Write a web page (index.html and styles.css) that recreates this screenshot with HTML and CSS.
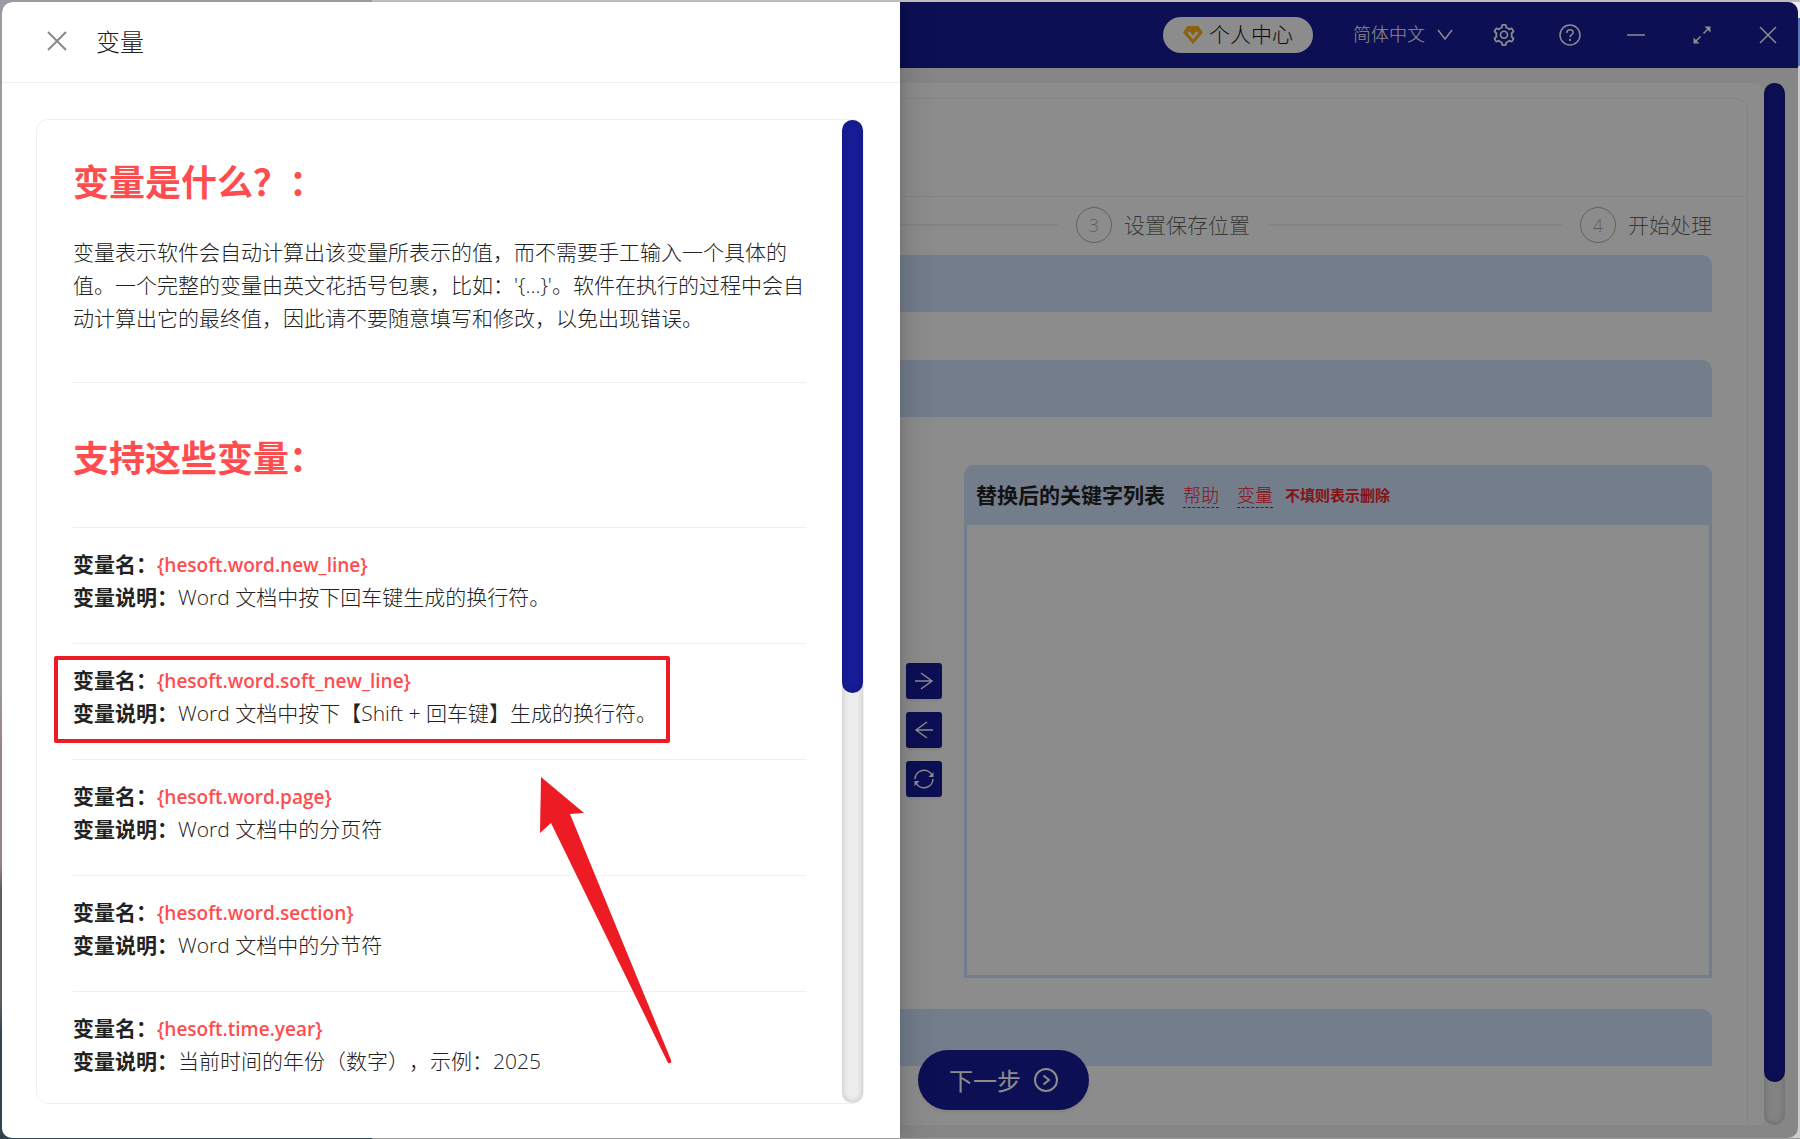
FILE: index.html
```
<!DOCTYPE html>
<html lang="zh-CN">
  <head>
    <meta charset="UTF-8" />
    <meta name="viewport" content="width=device-width, initial-scale=1.0" />
    <title>变量</title>
    <link rel="stylesheet" href="styles.css">
  </head>
  <body>
    <div class="window">
      <header class="titlebar">
        <button class="account" type="button">
          <svg class="icon-vip" viewBox="0 0 20 20" aria-hidden="true">
            <path d="M4.5 1h11L20 7.5 10 19 0 7.5z" fill="#ffb21f" />
            <path d="M5.5 7l4.5 5.5L14.5 7" fill="none" stroke="#fff" stroke-width="2.6" />
          </svg>
          <span>个人中心</span>
        </button>
        <label class="language">
          <select aria-label="语言">
            <option>简体中文</option>
          </select>
          <svg class="icon-chevron" viewBox="0 0 16 16" aria-hidden="true">
            <path d="M1 3l7 9 7-9" />
          </svg>
        </label>
        <nav class="tools">
          <button class="tool" type="button" aria-label="设置">
            <svg class="icon-filled" viewBox="64 64 896 896">
              <path d="M924.8 625.7l-65.5-56c3.1-19 4.7-38.4 4.7-57.8s-1.6-38.8-4.7-57.8l65.5-56a32.03 32.03 0 009.3-35.2l-.9-2.6a443.74 443.74 0 00-79.7-137.9l-1.8-2.1a32.12 32.12 0 00-35.1-9.5l-81.3 28.9c-30-24.6-63.5-44-99.7-57.6l-15.7-85a32.05 32.05 0 00-25.8-25.7l-2.7-.5c-52.1-9.4-106.9-9.4-159 0l-2.7.5a32.05 32.05 0 00-25.8 25.7l-15.8 85.4a351.86 351.86 0 00-99 57.4l-81.9-29.1a32 32 0 00-35.1 9.5l-1.8 2.1a446.02 446.02 0 00-79.7 137.9l-.9 2.6c-4.5 12.5-.8 26.5 9.3 35.2l66.3 56.6c-3.1 18.8-4.6 38-4.6 57.1 0 19.2 1.5 38.4 4.6 57.1L99 625.5a32.03 32.03 0 00-9.3 35.2l.9 2.6c18.1 50.4 44.9 96.9 79.7 137.9l1.8 2.1a32.12 32.12 0 0035.1 9.5l81.9-29.1c29.8 24.5 63.1 43.9 99 57.4l15.8 85.4a32.05 32.05 0 0025.8 25.7l2.7.5a449.4 449.4 0 00159 0l2.7-.5a32.05 32.05 0 0025.8-25.7l15.7-85a350 350 0 0099.7-57.6l81.3 28.9a32 32 0 0035.1-9.5l1.8-2.1c34.8-41.1 61.6-87.5 79.7-137.9l.9-2.6c4.5-12.3.8-26.3-9.3-35zM788.3 465.9c2.5 15.1 3.8 30.6 3.8 46.1s-1.3 31-3.8 46.1l-6.6 40.1 74.7 63.9a370.03 370.03 0 01-42.6 73.6L721 702.8l-31.4 25.8c-23.9 19.6-50.5 35-79.3 45.8l-38.1 14.3-17.9 97a377.5 377.5 0 01-85 0l-17.9-97.2-37.8-14.5c-28.5-10.8-55-26.2-78.7-45.7l-31.4-25.9-93.4 33.2c-17-22.9-31.2-47.6-42.6-73.6l75.5-64.5-6.5-40c-2.4-14.9-3.7-30.3-3.7-45.5 0-15.3 1.2-30.6 3.7-45.5l6.5-40-75.5-64.5c11.3-26.1 25.6-50.7 42.6-73.6l93.4 33.2 31.4-25.9c23.7-19.5 50.2-34.9 78.7-45.7l37.9-14.3 17.9-97.2c28.1-3.2 56.8-3.2 85 0l17.9 97 38.1 14.3c28.7 10.8 55.4 26.2 79.3 45.8l31.4 25.8 92.8-32.9c17 22.9 31.2 47.6 42.6 73.6L781.8 426l6.5 39.9zM512 326c-97.2 0-176 78.8-176 176s78.8 176 176 176 176-78.8 176-176-78.8-176-176-176zm79.2 255.2A111.6 111.6 0 01512 614c-29.9 0-58-11.7-79.2-32.8A111.6 111.6 0 01400 502c0-29.9 11.7-58 32.8-79.2C454 401.6 482.1 390 512 390c29.9 0 58 11.6 79.2 32.8A111.6 111.6 0 01624 502c0 29.9-11.7 58-32.8 79.2z" />
            </svg>
          </button>
          <button class="tool" type="button" aria-label="帮助">
            <svg viewBox="0 0 22 22">
              <circle cx="11" cy="11" r="10" />
              <path d="M7.8 9c0-2 1.4-3.2 3.2-3.2s3.2 1.2 3.2 2.9c0 2-3.2 2.1-3.2 4.5" />
              <circle cx="11" cy="16" r=".4" />
            </svg>
          </button>
          <button class="tool" type="button" aria-label="最小化">
            <svg viewBox="0 0 22 22"><path d="M2 11h18" /></svg>
          </button>
          <button class="tool" type="button" aria-label="最大化">
            <svg viewBox="0 0 22 22">
              <path d="M12.5 9.5L18 4M9.5 12.5L4 18" />
              <path class="tip" d="M13.5 2.5h6v6zM8.5 19.5h-6v-6z" />
            </svg>
          </button>
          <button class="tool" type="button" aria-label="关闭窗口">
            <svg viewBox="0 0 22 22"><path d="M3 3l16 16M19 3L3 19" /></svg>
          </button>
        </nav>
      </header>

      <main class="workspace">
        <div class="page">
          <section class="card">
            <div class="card-head"></div>
            <ol class="steps">
              <li class="step-lead"></li>
              <li class="step step-grow">
                <span class="step-number">3</span>
                <span class="step-title">设置保存位置</span>
              </li>
              <li class="step">
                <span class="step-number">4</span>
                <span class="step-title">开始处理</span>
              </li>
            </ol>
            <div class="bar"></div>
            <div class="bar"></div>
            <div class="transfer">
              <div class="panel"></div>
              <div class="transfer-buttons">
                <button class="move" type="button" aria-label="右移">
                  <svg viewBox="0 0 20 20"><path d="M1 10h17M7 2l11 8-11 8" /></svg>
                </button>
                <button class="move" type="button" aria-label="左移">
                  <svg viewBox="0 0 20 20"><path d="M19 10H2M13 2L2 10l11 8" /></svg>
                </button>
                <button class="move" type="button" aria-label="交换">
                  <svg viewBox="0 0 20 20">
                    <path d="M1 10A9 9 0 0 1 18 6.2M19 10A9 9 0 0 1 2 13.8" />
                    <path class="tip" d="M19.5 3v5h-5zM.5 17v-5h5z" />
                  </svg>
                </button>
              </div>
              <div class="panel">
                <div class="panel-head">
                  <h3>替换后的关键字列表</h3>
                  <a href="#help">帮助</a>
                  <a href="#variables">变量</a>
                  <small>不填则表示删除</small>
                </div>
              </div>
            </div>
            <div class="bar"></div>
          </section>
        </div>
        <div class="scrollbar">
          <div class="thumb thumb-page"></div>
        </div>
      </main>

      <button class="next" type="button">
        <span>下一步</span>
        <svg viewBox="0 0 24 24" aria-hidden="true">
          <circle cx="12" cy="12" r="11" />
          <path d="M9.5 7.5l5.5 4.5-5.5 4.5" />
        </svg>
      </button>

      <div class="mask"></div>

      <aside class="drawer" id="variables">
        <header class="drawer-head">
          <button class="close" type="button" aria-label="关闭">
            <svg viewBox="0 0 22 22"><path d="M2 2l18 18M20 2L2 20" /></svg>
          </button>
          <span>变量</span>
        </header>
        <div class="drawer-body">
          <div class="doc-card">
            <article class="doc">
              <section class="intro">
                <h1>变量是什么？：</h1>
                <p>
                  变量表示软件会自动计算出该变量所表示的值，而不需要手工输入一个具体的值。一个完整的变量由英文花括号包裹，比如：'{...}'。软件在执行的过程中会自动计算出它的最终值，因此请不要随意填写和修改，以免出现错误。
                </p>
              </section>
              <h1 class="list-title">支持这些变量：</h1>
              <section class="variable">
                <div><b>变量名：</b><code>{hesoft.word.new_line}</code></div>
                <div><b>变量说明：</b>Word 文档中按下回车键生成的换行符。</div>
              </section>
              <section class="variable marked">
                <div><b>变量名：</b><code>{hesoft.word.soft_new_line}</code></div>
                <div><b>变量说明：</b>Word 文档中按下【Shift + 回车键】生成的换行符。</div>
                <svg class="arrow" viewBox="0 0 134 288" aria-hidden="true">
                  <path d="M2 1l43 36-14 1 101 246q1 4-3 3L12 47 1 57z" />
                </svg>
              </section>
              <section class="variable">
                <div><b>变量名：</b><code>{hesoft.word.page}</code></div>
                <div><b>变量说明：</b>Word 文档中的分页符</div>
              </section>
              <section class="variable">
                <div><b>变量名：</b><code>{hesoft.word.section}</code></div>
                <div><b>变量说明：</b>Word 文档中的分节符</div>
              </section>
              <section class="variable">
                <div><b>变量名：</b><code>{hesoft.time.year}</code></div>
                <div><b>变量说明：</b>当前时间的年份（数字），示例：2025</div>
              </section>
            </article>
            <div class="scrollbar">
              <div class="thumb thumb-doc"></div>
            </div>
          </div>
        </div>
      </aside>
    </div>
  </body>
</html>
```
FILE: styles.css
```
*,
*::before,
*::after {
  box-sizing: border-box;
}
body {
  margin: 0;
  padding: 2px 2px 1px;
  height: 100vh;
  overflow: hidden;
  font-family: "Open Sans", "Noto Sans CJK SC", sans-serif;
  font-weight: 300;
  font-size: 21px;
  line-height: 33px;
  color: #222;
  text-spacing-trim: space-all;
  /* desktop behind the window */
  background:
    linear-gradient(#9b9ca3 0 59%, #988484 66% 76%, #5d5d64 78% 88%, #2f4450 91%) left / 372px 100% no-repeat,
    linear-gradient(#bcbcbc, #bcbcbc) top / 100% 2px no-repeat,
    linear-gradient(#999, #999) bottom / 100% 1px no-repeat,
    linear-gradient(#eee 0 18px, #5b78b8 18px 66px, #ccc 66px) #ccc;
}
button,
select {
  font: inherit;
  border: none;
  padding: 0;
  cursor: pointer;
}
svg {
  display: block;
  fill: none;
  stroke: currentColor;
  stroke-width: 1.5;
}
svg .tip,
svg.icon-filled {
  fill: currentColor;
  stroke: none;
}
.window {
  position: relative;
  display: flex;
  flex-direction: column;
  height: 100%;
  background: #f5f5f5;
  border-radius: 10px;
  overflow: hidden;
}

/* title bar */
.titlebar {
  display: flex;
  align-items: center;
  justify-content: flex-end;
  gap: 40px;
  height: 66px;
  padding: 0 19px 1px 0;
  background: #171c97;
  color: #fff;
}
.account {
  display: flex;
  align-items: center;
  gap: 6px;
  height: 36px;
  padding: 0 20px;
  border-radius: 18px;
  background: #fff;
  color: #111;
}
.icon-vip {
  width: 20px;
  stroke: none;
}
.language {
  display: flex;
  align-items: center;
  gap: 12px;
  font-size: 18px;
}
.language select {
  appearance: none;
  background: none;
  color: inherit;
}
.icon-chevron {
  width: 16px;
}
.tools {
  display: flex;
  gap: 44px;
}
.tool {
  width: 22px;
  background: none;
  color: #fff;
}

/* page behind the drawer */
.workspace {
  display: flex;
  flex: 1;
  min-height: 0;
  padding: 15px 13px 13px 14px;
}
.page {
  flex: 1;
  padding: 15px 16px 0;
  background: #fff;
  border-radius: 10px 10px 0 0;
  overflow: hidden;
}
.card {
  height: 120%;
  padding: 0 35px;
  border: 1px solid #f0f0f0;
  border-radius: 12px;
}
.card-head {
  height: 98px;
  margin: 0 -35px 10px;
  border-bottom: 1px solid #f0f0f0;
}
.steps {
  display: flex;
  margin: 0 0 12px;
  padding: 0;
  list-style: none;
}
.step-lead {
  flex: 2;
}
.step {
  display: flex;
  align-items: center;
  gap: 12px;
  color: rgba(0, 0, 0, 0.6);
}
.step-grow {
  flex: 1;
}
.step-lead,
.step-grow {
  display: flex;
  align-items: center;
}
.step-lead::after,
.step-grow::after {
  content: "";
  flex: 1;
  height: 2px;
  margin: 0 18px 0 6px;
  background: #f0f0f0;
}
.step-number {
  width: 36px;
  height: 36px;
  border: 1px solid rgba(0, 0, 0, 0.3);
  border-radius: 50%;
  font-size: 18px;
  line-height: 34px;
  text-align: center;
  color: rgba(0, 0, 0, 0.35);
}
.bar {
  height: 57px;
  margin-bottom: 48px;
  background: #d2e3fd;
  border-radius: 10px 10px 0 0;
}
.transfer {
  display: grid;
  grid-template-columns: 1fr 148px 1fr;
  margin-bottom: 31px;
}
.panel {
  height: 513px;
  border: 3px solid #d2e3fd;
  border-radius: 10px 10px 0 0;
}
.panel-head {
  display: flex;
  align-items: center;
  height: 57px;
  padding: 0 0 3px 9px;
  background: #d2e3fd;
  font-size: 18px;
  line-height: 24px;
}
.panel-head h3 {
  margin: 0;
  font-size: 21px;
  font-weight: 700;
}
.panel-head a {
  margin-left: 18px;
  color: #f5222d;
  text-decoration: none;
  border-bottom: 1px dashed red;
}
.panel-head small {
  margin-left: 12px;
  font-size: 15px;
  font-weight: 700;
  color: #f5222d;
}
.transfer-buttons {
  display: flex;
  flex-direction: column;
  align-items: flex-end;
  justify-content: center;
  gap: 13px;
  padding: 17px 22px 0 0;
}
.move {
  display: grid;
  place-items: center;
  width: 36px;
  height: 36px;
  border-radius: 3px;
  background: #171c97;
  color: #fff;
  box-shadow: 0 2px 2px rgba(0, 0, 0, 0.06);
}
.move svg {
  width: 20px;
}
.next {
  position: absolute;
  left: calc(50% + 18px);
  bottom: 28px;
  display: flex;
  align-items: center;
  gap: 13px;
  height: 60px;
  padding: 0 31px;
  border-radius: 30px;
  background: #171c97;
  color: #fff;
  font-size: 24px;
  font-weight: 400;
  box-shadow: 0 3px 3px rgba(0, 0, 0, 0.06);
}
.next svg {
  width: 24px;
  stroke-width: 2;
}
.scrollbar {
  width: 21px;
  border-radius: 11px;
  background: #ededed;
  box-shadow: inset 0 0 6px rgba(0, 0, 0, 0.2);
}
.thumb {
  border-radius: 11px;
  background: #171c97;
  box-shadow: inset 0 0 6px rgba(0, 0, 0, 0.2);
}
.thumb-page {
  height: 95.9%;
}
.thumb-doc {
  height: 58.3%;
}
.mask {
  position: absolute;
  inset: 0;
  background: rgba(0, 0, 0, 0.45);
}

/* drawer */
.drawer {
  position: absolute;
  inset: 0 50% 0 0;
  display: flex;
  flex-direction: column;
  background: #fff;
  box-shadow:
    6px 0 16px rgba(0, 0, 0, 0.08),
    3px 0 6px -4px rgba(0, 0, 0, 0.12),
    9px 0 28px 8px rgba(0, 0, 0, 0.05);
}
.drawer-head {
  display: flex;
  align-items: center;
  gap: 28px;
  height: 81px;
  padding: 0 0 2px 44px;
  border-bottom: 1px solid #f0f0f0;
  font-size: 24px;
}
.close {
  width: 22px;
  background: none;
  color: #888;
}
.close svg {
  stroke-width: 2;
}
.drawer-body {
  flex: 1;
  min-height: 0;
  padding: 36px 36px 34px 34px;
}
.doc-card {
  display: flex;
  height: 100%;
  border: 1px solid #f0f0f0;
  border-radius: 12px;
}
.doc {
  flex: 1;
  padding: 0 36px;
  overflow: hidden;
}
.doc h1 {
  margin: 0;
  font-size: 36px;
  line-height: 54px;
  font-weight: 700;
  color: #ff4d4f;
}
.intro {
  padding: 36px 0 47px;
}
.intro p {
  margin: 26px 0 0;
}
.doc .list-title {
  padding: 49px 0 41px;
  border-top: 1px solid #f0f0f0;
}
.variable {
  padding: 20px 0 29px;
  border-top: 1px solid #f0f0f0;
}
.variable b {
  font-weight: 700;
}
.variable code {
  font-family: inherit;
  font-size: 19px;
  font-weight: 600;
  line-height: 24px;
  color: #ff4d4f;
}
.marked {
  position: relative;
}
/* red frame drawn round the marked variable */
.marked::before {
  content: "";
  position: absolute;
  top: 12px;
  left: -19px;
  width: 616px;
  height: 87px;
  border: 4px solid #ed1c24;
  border-radius: 2px;
}
.arrow {
  position: absolute;
  z-index: 1;
  top: 132px;
  left: 466px;
  width: 134px;
  fill: #ed1c24;
  stroke: none;
}
```
